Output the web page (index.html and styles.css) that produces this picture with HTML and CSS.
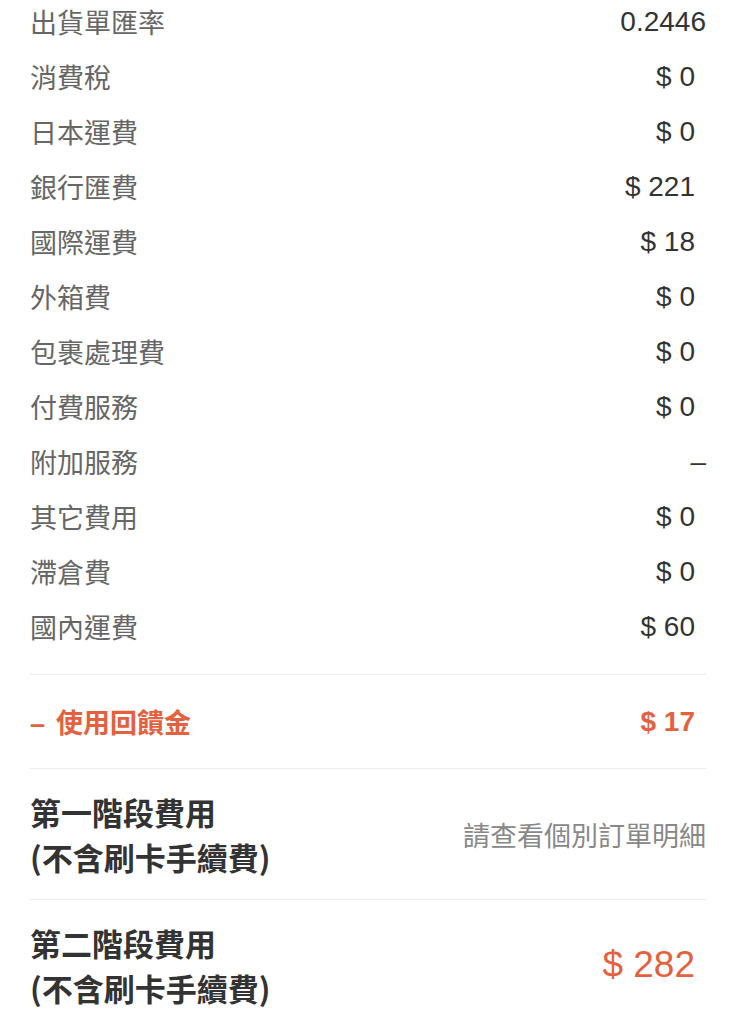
FILE: index.html
```html
<!DOCTYPE html>
<html lang="zh-Hant">
<head>
<meta charset="utf-8">
<link rel="stylesheet" href="styles.css">
</head>
<body>
<div class="sheet">
  <div class="fees">
    <div class="row"><span class="label">出貨單匯率</span><span class="value">0.2446</span></div>
    <div class="row"><span class="label">消費稅</span><span class="value money">$ 0</span></div>
    <div class="row"><span class="label">日本運費</span><span class="value money">$ 0</span></div>
    <div class="row"><span class="label">銀行匯費</span><span class="value money">$ 221</span></div>
    <div class="row"><span class="label">國際運費</span><span class="value money">$ 18</span></div>
    <div class="row"><span class="label">外箱費</span><span class="value money">$ 0</span></div>
    <div class="row"><span class="label">包裹處理費</span><span class="value money">$ 0</span></div>
    <div class="row"><span class="label">付費服務</span><span class="value money">$ 0</span></div>
    <div class="row"><span class="label">附加服務</span><span class="value">–</span></div>
    <div class="row"><span class="label">其它費用</span><span class="value money">$ 0</span></div>
    <div class="row"><span class="label">滯倉費</span><span class="value money">$ 0</span></div>
    <div class="row"><span class="label">國內運費</span><span class="value money">$ 60</span></div>
  </div>
  <div class="section rebate">
    <span class="label accent"><span class="minus">–</span>使用回饋金</span><span class="value money accent">$ 17</span>
  </div>
  <div class="section stage">
    <div class="stage-label">第一階段費用<br>(不含刷卡手續費)</div>
    <span class="note">請查看個別訂單明細</span>
  </div>
  <div class="section stage">
    <div class="stage-label">第二階段費用<br>(不含刷卡手續費)</div>
    <span class="total money">$ 282</span>
  </div>
</div>
</body>
</html>
```

FILE: styles.css
```css
html, body {
  margin: 0;
  padding: 0;
  background: #ffffff;
}
body {
  font-family: "Liberation Sans", "Noto Sans CJK TC", sans-serif;
  overflow: hidden;
}
.sheet {
  padding: 0 31px 0 30px;
  margin-top: -6px;
}
.fees {
  padding-bottom: 20px;
}
.row {
  height: 55px;
  display: flex;
  justify-content: space-between;
  align-items: center;
}
.label {
  font-family: "Noto Sans CJK TC", sans-serif;
  font-size: 27px;
  color: #666666;
}
.value {
  font-size: 28px;
  color: #333333;
}
.money {
  padding-right: 11px;
}
.section {
  border-top: 1px solid #ececec;
  display: flex;
  justify-content: space-between;
  align-items: center;
}
.rebate {
  height: 93px;
}
.accent {
  color: #e4613f;
  font-weight: 700;
}
.minus {
  font-family: "Liberation Sans", sans-serif;
  margin-right: 11px;
}
.stage {
  padding: 20px 0;
}
.stage-label {
  font-family: "Noto Sans CJK TC", sans-serif;
  font-size: 31px;
  line-height: 45px;
  font-weight: 700;
  color: #333333;
}
.note {
  font-family: "Noto Sans CJK TC", sans-serif;
  font-size: 27px;
  color: #888888;
}
.total {
  font-size: 37px;
  color: #e4613f;
}
```
